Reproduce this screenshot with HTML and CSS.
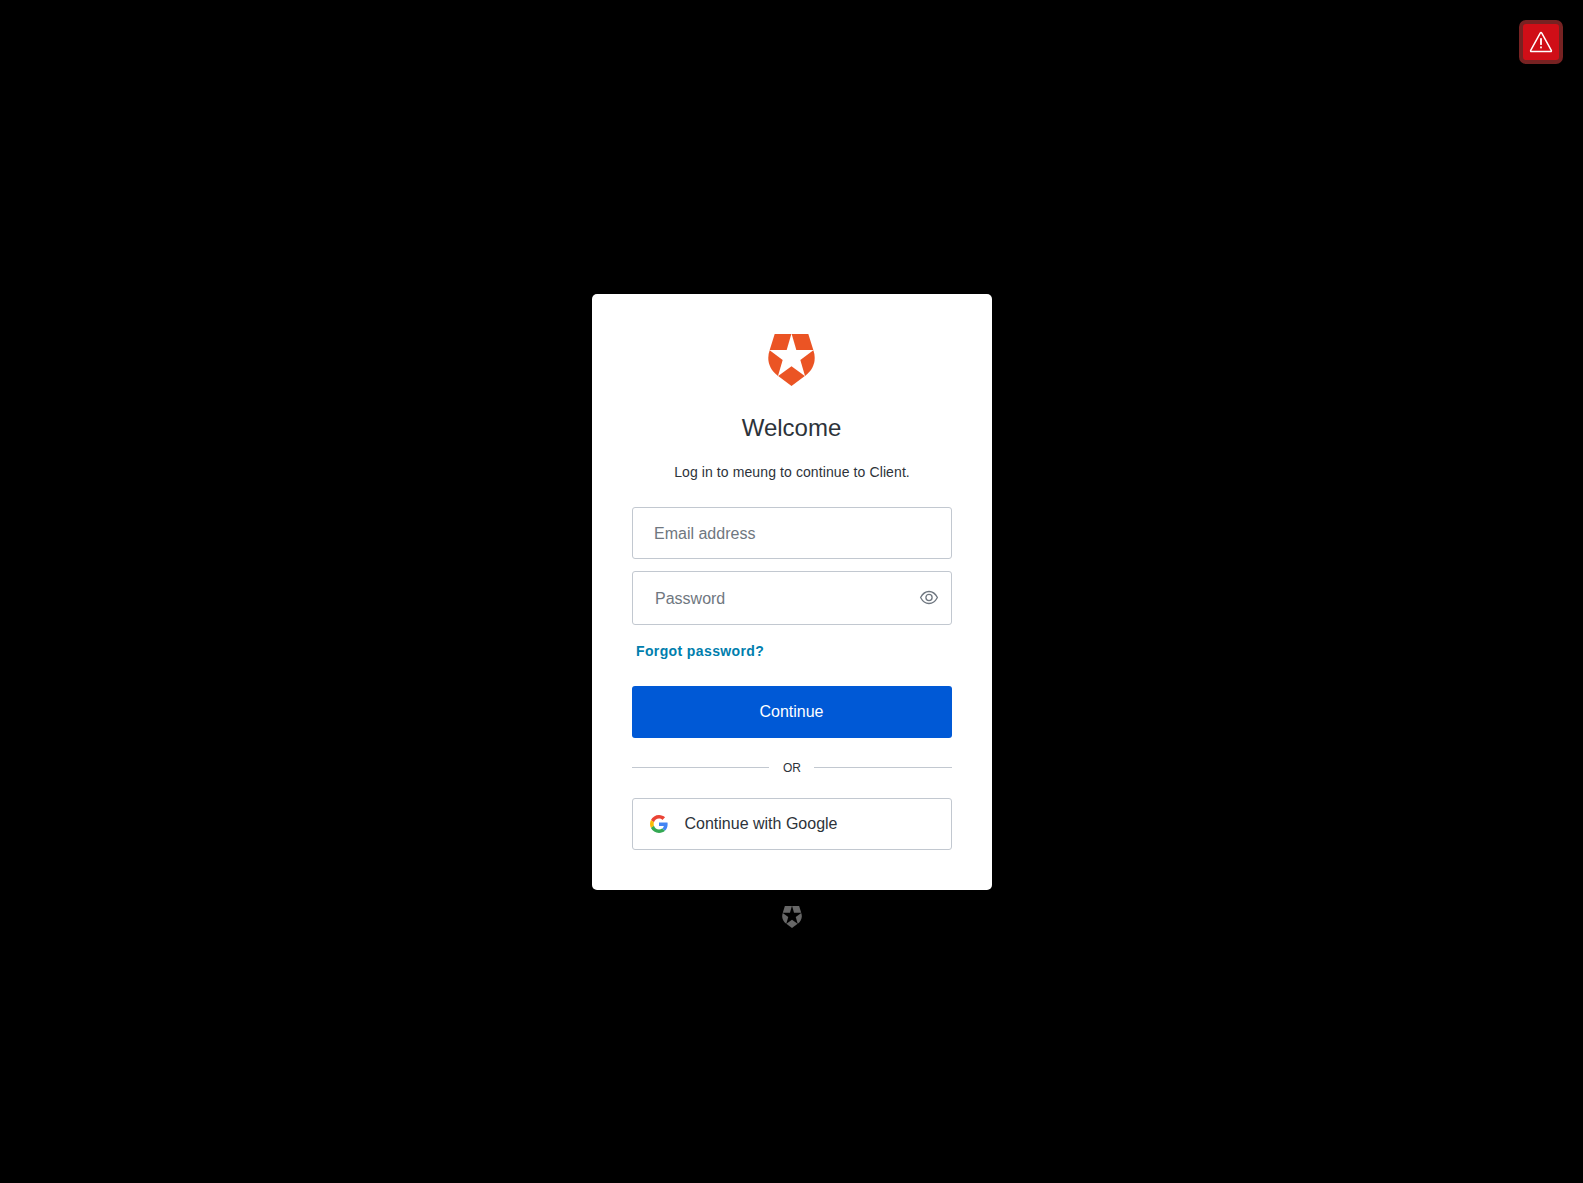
FILE: index.html
```html
<!DOCTYPE html>
<html lang="en">
<head>
<meta charset="utf-8">
<title>Log in</title>
<link rel="stylesheet" href="styles.css">
</head>
<body>
<svg class="defs" aria-hidden="true">
  <symbol id="shield" viewBox="0 0 141 156">
    <path d="M20 0H70L56 48H5Z"/>
    <path d="M71 0H121L136 48H85Z"/>
    <path d="M5 49L44 78L30 126C3 106 -5 77 5 49Z"/>
    <path d="M136 49L97 78L111 126C138 106 146 77 136 49Z"/>
    <path d="M70.5 97L110.5 126L70.5 156L30.5 126Z"/>
  </symbol>
</svg>
<button class="alert" aria-label="Warning">
  <svg width="24" height="24" viewBox="0 0 24 24" fill="none" stroke="#fff" stroke-width="1.5" stroke-linejoin="round" stroke-linecap="round"><path d="M11.2 3.1Q12 1.8 12.8 3.1L22.3 20.3Q22.7 21.6 21.6 21.6H2.4Q1.3 21.6 1.7 20.3Z"/><path d="M12 8.8V14.2" stroke-width="1.8"/><path d="M12 17.2V17.6" stroke-width="1.8"/></svg>
</button>
<main class="login">
  <section class="card">
    <svg class="logo"><use href="#shield"/></svg>
    <h1 class="title">Welcome</h1>
    <p class="subtitle">Log in to meung to continue to Client.</p>
    <form class="form">
      <div class="field">Email address</div>
      <div class="field field-password">
        <span>Password</span>
        <svg class="eye" width="20" height="16" viewBox="0 0 20 16" fill="none" stroke="#6f7780" stroke-width="1.3"><path d="M1.6 7.5C3.6 3.7 6.4 1.5 10 1.5S16.4 3.7 18.4 7.5C16.4 11.3 13.6 13.5 10 13.5S3.6 11.3 1.6 7.5Z"/><circle cx="10" cy="7.5" r="3.1"/></svg>
      </div>
      <a class="forgot">Forgot password?</a>
      <div class="primary">Continue</div>
    </form>
    <div class="divider"><span>OR</span></div>
    <div class="google">
      <svg width="18" height="18" viewBox="0 0 48 48"><path fill="#EA4335" d="M24 9.5c3.54 0 6.71 1.22 9.21 3.6l6.85-6.85C35.9 2.38 30.47 0 24 0 14.62 0 6.51 5.38 2.56 13.22l7.98 6.19C12.43 13.72 17.74 9.5 24 9.5z"/><path fill="#4285F4" d="M46.98 24.55c0-1.57-.15-3.09-.38-4.55H24v9.02h12.94c-.58 2.96-2.26 5.48-4.78 7.18l7.73 6c4.51-4.18 7.09-10.36 7.09-17.65z"/><path fill="#FBBC05" d="M10.53 28.59c-.48-1.45-.76-2.99-.76-4.59s.27-3.14.76-4.59l-7.98-6.19C.92 16.46 0 20.12 0 24c0 3.88.92 7.54 2.56 10.78l7.97-6.19z"/><path fill="#34A853" d="M24 48c6.48 0 11.93-2.13 15.89-5.81l-7.73-6c-2.15 1.45-4.92 2.3-8.16 2.3-6.26 0-11.57-4.22-13.47-9.91l-7.98 6.19C6.51 42.62 14.62 48 24 48z"/></svg>
      <span>Continue with Google</span>
    </div>
  </section>
  <svg class="badge"><use href="#shield"/></svg>
</main>
</body>
</html>
```
FILE: styles.css
```css
* { box-sizing: border-box; }
body {
  margin: 0;
  min-height: 100vh;
  background: #000;
  color: #2d333a;
  font-family: "Liberation Sans", Arial, sans-serif;
}
.defs { position: absolute; width: 0; height: 0; }
.alert {
  position: absolute;
  top: 20px;
  right: 20px;
  width: 44px;
  height: 44px;
  padding: 0;
  display: grid;
  place-items: center;
  border: 4px solid #772222;
  border-radius: 7px;
  background: #d00e17;
}
.login {
  display: flex;
  flex-direction: column;
  align-items: center;
  padding: 294px 0 0 1px;
}
.card {
  display: flex;
  flex-direction: column;
  width: 400px;
  height: 596px;
  padding: 40px;
  border-radius: 5px;
  background: #fff;
}
.logo {
  align-self: center;
  width: 47px;
  height: 52px;
  margin-right: 1px;
  fill: #eb5424;
}
.title {
  margin: 24px 1px 0 0;
  font-size: 24px;
  font-weight: 400;
  line-height: 36px;
  text-align: center;
}
.subtitle {
  margin: 16px 0 0;
  font-size: 14px;
  line-height: 21px;
  letter-spacing: 0.1px;
  text-align: center;
}
.form { display: flex; flex-direction: column; margin-top: 24px; }
.field {
  display: flex;
  align-items: center;
  height: 52px;
  padding: 2px 21px 0;
  border: 1px solid #c2c8d0;
  border-radius: 3px;
  color: #6f7780;
  font-size: 16px;
}
.field-password {
  justify-content: space-between;
  height: 54px;
  margin-top: 12px;
  padding: 2px 12px 0 22px;
}
.eye { margin-bottom: 2px; }
.forgot {
  margin: 16px 0 0 4px;
  color: #007ead;
  font-size: 14px;
  font-weight: 700;
  line-height: 21px;
  letter-spacing: 0.38px;
}
.primary {
  display: grid;
  place-items: center;
  height: 52px;
  margin-top: 24px;
  padding-right: 1px;
  border-radius: 3px;
  background: #0059d6;
  color: #fff;
  font-size: 16px;
}
.divider {
  display: flex;
  align-items: center;
  height: 18px;
  margin-top: 21px;
  font-size: 12px;
  gap: 13px;
}
.divider::before,
.divider::after {
  content: "";
  flex: 1;
  height: 1px;
  margin-bottom: 2px;
  background: #c2c8d0;
}
.divider::before { flex: 0 0 137px; }
.divider span { margin-left: 1px; }
.google {
  display: flex;
  align-items: center;
  gap: 16.5px;
  height: 52px;
  margin-top: 21px;
  padding: 0 17px;
  border: 1px solid #c2c8d0;
  border-radius: 3px;
  font-size: 16px;
}
.badge {
  width: 20px;
  height: 22px;
  margin-top: 16px;
  fill: #676767;
}
```
